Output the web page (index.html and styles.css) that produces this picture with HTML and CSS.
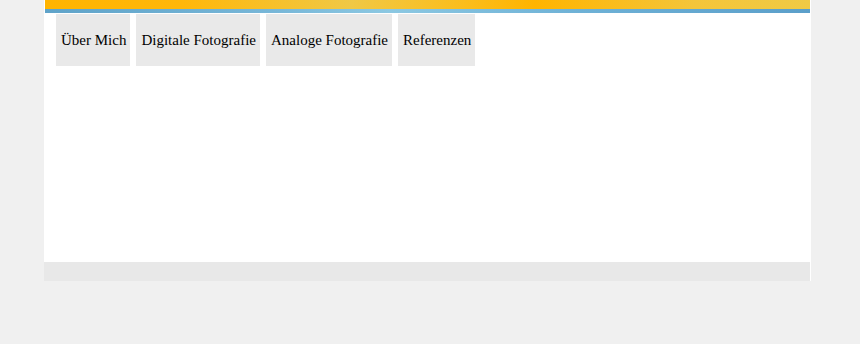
FILE: index.html
```html
<!DOCTYPE html>
<html lang="de">
<head>
    <meta charset="UTF-8">
    <title>Fotografie</title>
    <link rel="stylesheet" href="styles.css">
</head>
<body>
    <div class="page">
        <div class="header">
            <div class="header-sun"></div>
            <div class="header-line"></div>
        </div>
        <ul class="nav">
            <li><a href="#">Über Mich</a></li>
            <li><a href="#">Digitale Fotografie</a></li>
            <li><a href="#">Analoge Fotografie</a></li>
            <li><a href="#">Referenzen</a></li>
        </ul>
        <div class="content"></div>
        <div class="footer"></div>
    </div>
</body>
</html>
```

FILE: styles.css
```css
body { margin: 0; background-color: #f0f0f0; font-family: "Liberation Serif", "Times New Roman", serif; }
.page { width: 767px; margin-left: 44px; background-color: #fff; }
.header { margin: 0 1px; }
.header-sun { height: 9px; background: linear-gradient(to right, #ffb400 0%, #ffb70a 18%, #f0c845 40%, #fbbd1c 55%, #ffb400 64%, #f4c53a 85%, #f0ca45 100%); }
.header-line { height: 4px; background: linear-gradient(to right, #5fa3c9 0%, #78b7d8 30%, #8cc8e2 45%, #6eb1d6 70%, #5b9fca 100%); }
.nav { list-style: none; margin: 1px 0 0 0; padding: 0 0 0 12px; display: flex; gap: 6px; }
.nav li { background-color: #e9e9e9; }
.nav a { display: block; padding: 17px 4px 17px 5px; color: #000; text-decoration: none; font-size: 15px; line-height: 18px; }
.content { height: 196px; }
.footer { height: 19px; margin-right: 1px; background-color: #e8e8e8; }
```
